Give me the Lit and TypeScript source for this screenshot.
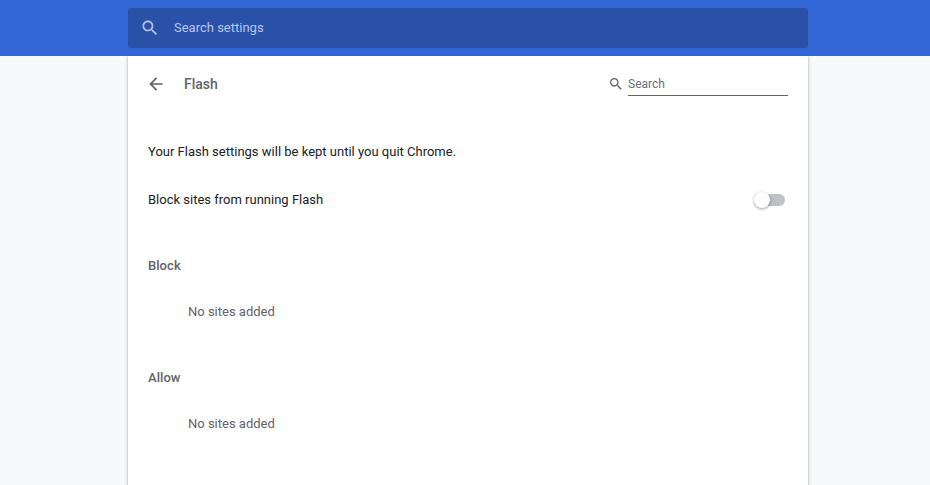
import { LitElement, html, css } from "lit";
import { customElement } from "lit/decorators.js";

const searchPath = "M15.5 14h-.79l-.28-.27C15.41 12.59 16 11.11 16 9.5 16 5.91 13.09 3 9.5 3S3 5.91 3 9.5 5.91 16 9.5 16c1.61 0 3.09-.59 4.23-1.57l.27.28v.79l5 4.99L20.49 19l-4.99-5zm-6 0C7.01 14 5 11.99 5 9.5S7.01 5 9.5 5 14 7.01 14 9.5 11.99 14 9.5 14z";

@customElement("app-root")
export class AppRoot extends LitElement {
  static styles = css`
    :host {
      display: block;
      height: 485px;
      overflow: hidden;
      background: #f8f9fa;
      font-family: Roboto, "Liberation Sans", sans-serif;
      font-size: 13px;
      color: #202124;
    }
    .top {
      height: 56px;
      background: #3367d6;
      display: flex;
      align-items: center;
      padding-left: 128px;
    }
    .search {
      width: 680px;
      height: 40px;
      box-sizing: border-box;
      background: #2a51a8;
      border-radius: 2px;
      display: flex;
      align-items: center;
      padding-left: 12px;
      gap: 14px;
      color: #b6c7ec;
      font-size: 13px;
    }
    .search svg { width: 20px; height: 20px; fill: #b6c7ec; flex: none; }
    .search span { margin-bottom: 1px; }
    .card {
      width: 680px;
      height: 429px;
      margin-left: 128px;
      box-sizing: border-box;
      background: #fff;
      box-shadow: 0 1px 2px rgba(60, 64, 67, 0.3), 0 1px 3px 1px rgba(60, 64, 67, 0.15);
      padding: 0 20px;
    }
    .sub {
      height: 56px;
      display: flex;
      align-items: center;
    }
    .back { width: 20px; height: 20px; fill: #5f6368; flex: none; margin: 0 18px 0 -2px; }
    .title { font-size: 14px; font-weight: 500; color: #5f6368; flex: 1; }
    .find { display: flex; align-items: center; }
    .find svg { width: 16px; height: 16px; fill: #5f6368; margin-right: 4px; }
    .field {
      width: 160px;
      height: 24px;
      box-sizing: border-box;
      border-bottom: 1px solid #5f6368;
      color: #6b6f75;
      font-size: 12px;
      line-height: 25px;
    }
    .note { height: 48px; line-height: 48px; margin-top: 16px; }
    .row {
      height: 48px;
      display: flex;
      align-items: center;
      justify-content: space-between;
    }
    .row span { margin-bottom: 2px; }
    .toggle { width: 31px; height: 16px; position: relative; margin-right: 3px; }
    .track {
      position: absolute;
      left: 4px;
      right: 0;
      top: 2px;
      height: 12px;
      border-radius: 6px;
      background: #bdc1c6;
    }
    .knob {
      position: absolute;
      left: 0;
      top: 0;
      width: 16px;
      height: 16px;
      border-radius: 50%;
      background: #fff;
      box-shadow: 0 1px 3px rgba(0, 0, 0, 0.4);
    }
    .head {
      font-size: 13px;
      font-weight: 500;
      letter-spacing: 0.05px;
      color: #5f6368;
      height: 20px;
      line-height: 20px;
    }
    .block { margin-top: 32px; }
    .allow { margin-top: 46px; }
    .empty {
      color: #5f6368;
      padding-left: 40px;
      height: 20px;
      line-height: 20px;
      margin-top: 26px;
    }
  `;

  render() {
    return html`
      <div class="top">
        <div class="search">
          <svg viewBox="0 0 24 24"><path d="${searchPath}"></path></svg>
          <span>Search settings</span>
        </div>
      </div>
      <div class="card">
        <div class="sub">
          <svg class="back" viewBox="0 0 24 24"><path d="M20 11H7.83l5.59-5.59L12 4l-8 8 8 8 1.41-1.41L7.83 13H20v-2z"></path></svg>
          <div class="title">Flash</div>
          <div class="find">
            <svg viewBox="0 0 24 24"><path d="${searchPath}"></path></svg>
            <div class="field">Search</div>
          </div>
        </div>
        <div class="note">Your Flash settings will be kept until you quit Chrome.</div>
        <div class="row">
          <span>Block sites from running Flash</span>
          <div class="toggle"><div class="track"></div><div class="knob"></div></div>
        </div>
        <div class="head block">Block</div>
        <div class="empty">No sites added</div>
        <div class="head allow">Allow</div>
        <div class="empty">No sites added</div>
      </div>
    `;
  }
}
